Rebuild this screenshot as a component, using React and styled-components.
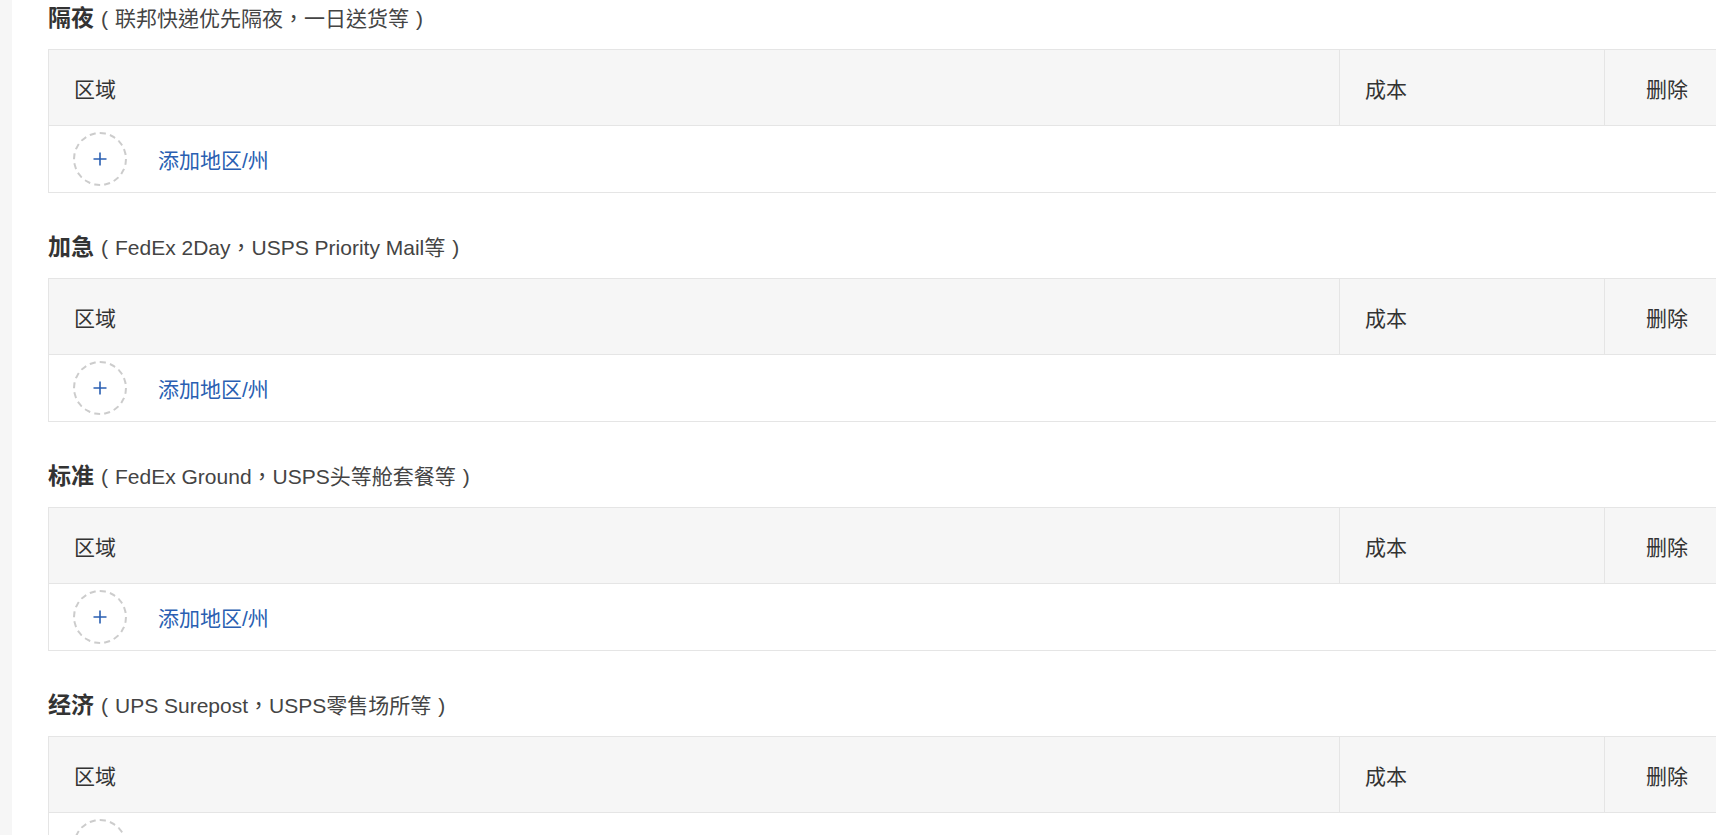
import React from 'react';
import styled, { createGlobalStyle } from 'styled-components';

const GlobalStyle = createGlobalStyle`
  html, body {
    margin: 0;
    padding: 0;
    background: #ffffff;
    overflow: hidden;
  }
  body {
    font-family: "Liberation Sans", "Noto Sans CJK SC", sans-serif;
    color: #333333;
  }
`;

const Page = styled.div`
  display: flex;
  min-height: 835px;
`;

const SideStrip = styled.div`
  width: 12px;
  flex-shrink: 0;
  background: #f6f6f6;
`;

const Content = styled.div`
  padding: 3px 0 0 36px;
  display: flex;
  flex-direction: column;
  gap: 39px;
`;

const Section = styled.section`
  display: flex;
  flex-direction: column;
`;

const Heading = styled.div`
  height: 30px;
  line-height: 30px;
  margin-bottom: 16px;
  white-space: nowrap;
`;

const HeadingMain = styled.span`
  font-size: 23px;
  font-weight: bold;
  color: #333333;
`;

/* TC glyphs centre the full-width comma, like the reference */
const HeadingNote = styled.span`
  font-family: "Liberation Sans", "Noto Sans CJK TC", sans-serif;
  font-size: 21px;
  color: #444444;
`;

// bracket sits in the middle of a full-width cell
const Paren = styled.span`
  display: inline-block;
  width: 1em;
  text-align: center;
`;

const Table = styled.div`
  width: 1680px;
  border: 1px solid #e5e5e5;
`;

const HeaderRow = styled.div`
  display: grid;
  grid-template-columns: 1fr 265px 125px;
  height: 75px;
  background: #f6f6f6;
  border-bottom: 1px solid #e5e5e5;
`;

const HeaderCell = styled.div`
  display: flex;
  align-items: center;
  justify-content: ${p => (p.$center ? 'center' : 'flex-start')};
  padding-left: ${p => (p.$center ? 0 : 25)}px;
  font-size: 21px;
  color: #333333;
  border-left: ${p => (p.$divider ? '1px solid #e5e5e5' : 'none')};
`;

const BodyRow = styled.div`
  display: flex;
  align-items: center;
  height: 66px;
  padding-left: 24px;
  gap: 31px;
`;

const AddCircle = styled.button`
  width: 54px;
  height: 54px;
  border-radius: 50%;
  border: 2px dashed #cccccc;
  background: transparent;
  display: flex;
  align-items: center;
  justify-content: center;
  padding: 0;
  cursor: pointer;
`;

const AddLink = styled.a`
  font-size: 21px;
  color: #2a5fb2;
  text-decoration: none;
  cursor: pointer;
`;

const PlusIcon = () => (
  <svg width="14" height="14" viewBox="0 0 14 14">
    <path d="M7 0.5v13M0.5 7h13" stroke="#2a5fb2" strokeWidth="1.6" fill="none" />
  </svg>
);

const sections = [
  { name: '隔夜', note: '联邦快递优先隔夜，一日送货等' },
  { name: '加急', note: 'FedEx 2Day，USPS Priority Mail等' },
  { name: '标准', note: 'FedEx Ground，USPS头等舱套餐等' },
  { name: '经济', note: 'UPS Surepost，USPS零售场所等' },
];

const ShippingSection = ({ name, note }) => (
  <Section>
    <Heading>
      <HeadingMain>{name}</HeadingMain>
      <HeadingNote>
        <Paren>(</Paren>
        {note}
        <Paren>)</Paren>
      </HeadingNote>
    </Heading>
    <Table>
      <HeaderRow>
        <HeaderCell>区域</HeaderCell>
        <HeaderCell $divider>成本</HeaderCell>
        <HeaderCell $divider $center>删除</HeaderCell>
      </HeaderRow>
      <BodyRow>
        <AddCircle aria-label="添加">
          <PlusIcon />
        </AddCircle>
        <AddLink>添加地区/州</AddLink>
      </BodyRow>
    </Table>
  </Section>
);

export default function App() {
  return (
    <>
      <GlobalStyle />
      <Page>
        <SideStrip />
        <Content>
          {sections.map(s => (
            <ShippingSection key={s.name} name={s.name} note={s.note} />
          ))}
        </Content>
      </Page>
    </>
  );
}
